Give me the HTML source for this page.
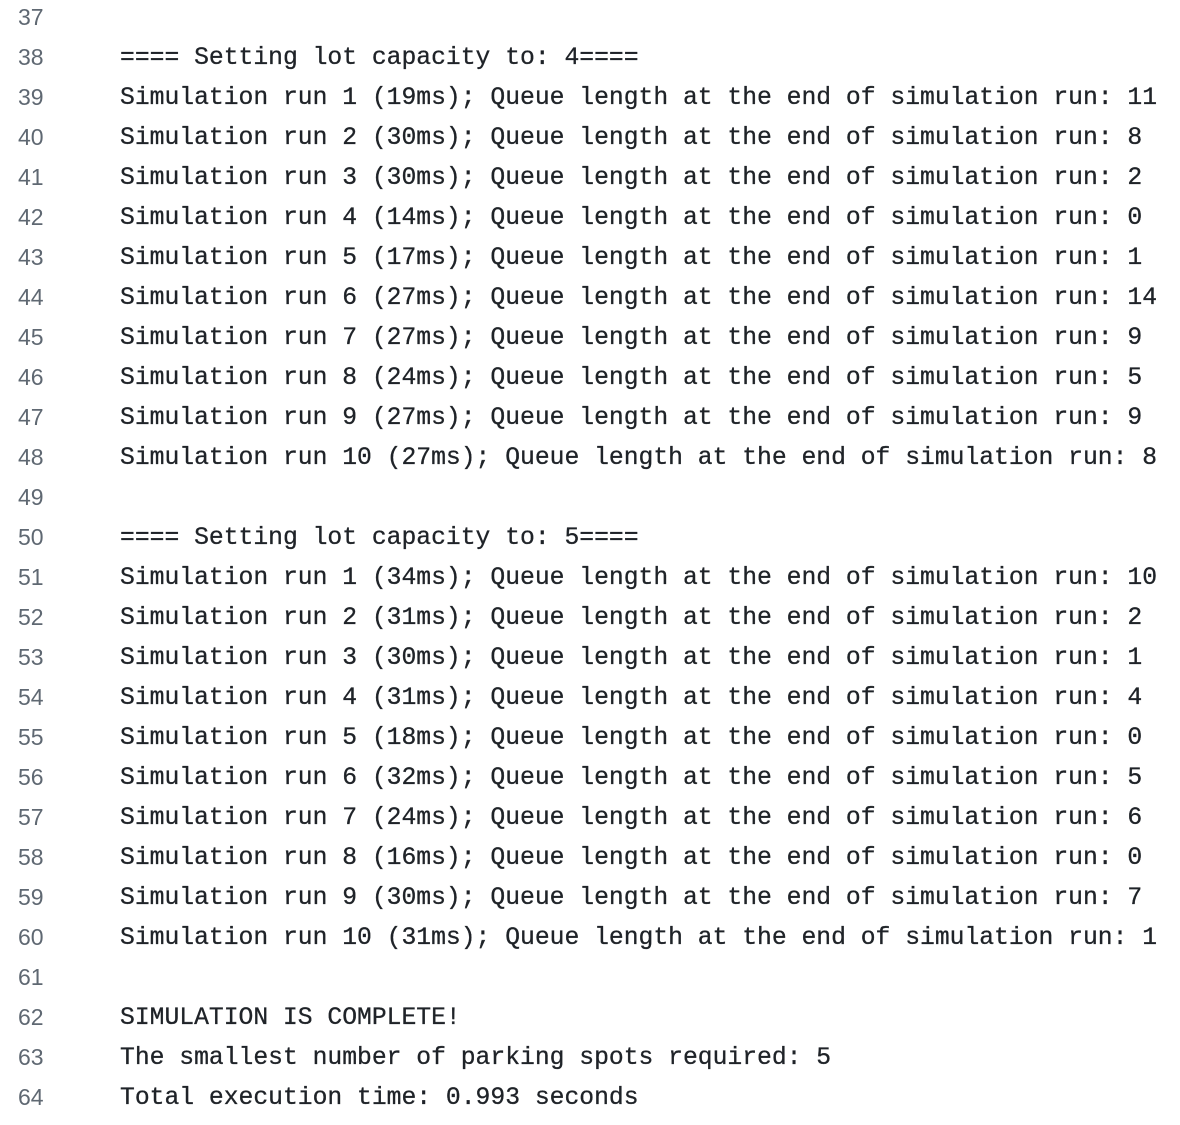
<!DOCTYPE html>
<html><head><style>
body{margin:0;background:#fff;width:1180px;height:1125px;overflow:hidden}
.l{position:absolute;left:0;height:40px;width:1180px}
.n{position:absolute;left:18px;top:0;line-height:40px;font:23px "Liberation Sans",sans-serif;color:#5f6872}
.c{position:absolute;left:120px;top:0;line-height:40px;font:24.7px "Liberation Mono",monospace;color:#1f2328;white-space:pre;-webkit-text-stroke:0.3px #1f2328}
</style></head><body>
<div id="w"></div>
<script>
var t=["","==== Setting lot capacity to: 4====",
"Simulation run 1 (19ms); Queue length at the end of simulation run: 11",
"Simulation run 2 (30ms); Queue length at the end of simulation run: 8",
"Simulation run 3 (30ms); Queue length at the end of simulation run: 2",
"Simulation run 4 (14ms); Queue length at the end of simulation run: 0",
"Simulation run 5 (17ms); Queue length at the end of simulation run: 1",
"Simulation run 6 (27ms); Queue length at the end of simulation run: 14",
"Simulation run 7 (27ms); Queue length at the end of simulation run: 9",
"Simulation run 8 (24ms); Queue length at the end of simulation run: 5",
"Simulation run 9 (27ms); Queue length at the end of simulation run: 9",
"Simulation run 10 (27ms); Queue length at the end of simulation run: 8",
"","==== Setting lot capacity to: 5====",
"Simulation run 1 (34ms); Queue length at the end of simulation run: 10",
"Simulation run 2 (31ms); Queue length at the end of simulation run: 2",
"Simulation run 3 (30ms); Queue length at the end of simulation run: 1",
"Simulation run 4 (31ms); Queue length at the end of simulation run: 4",
"Simulation run 5 (18ms); Queue length at the end of simulation run: 0",
"Simulation run 6 (32ms); Queue length at the end of simulation run: 5",
"Simulation run 7 (24ms); Queue length at the end of simulation run: 6",
"Simulation run 8 (16ms); Queue length at the end of simulation run: 0",
"Simulation run 9 (30ms); Queue length at the end of simulation run: 7",
"Simulation run 10 (31ms); Queue length at the end of simulation run: 1",
"","SIMULATION IS COMPLETE!",
"The smallest number of parking spots required: 5",
"Total execution time: 0.993 seconds"];
var h="";for(var i=0;i<t.length;i++){h+='<div class="l" style="top:'+(4+i*40)+'px"><span class="n">'+(37+i)+'</span><span class="c">'+t[i]+'</span></div>';}
document.getElementById("w").innerHTML=h;
</script>
</body></html>
